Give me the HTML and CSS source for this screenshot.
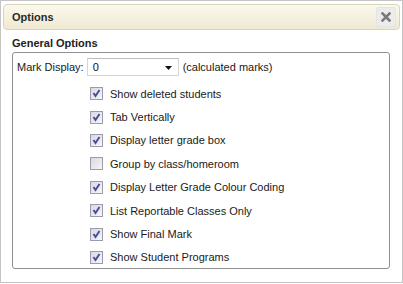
FILE: index.html
```html
<!DOCTYPE html>
<html>
<head>
<meta charset="utf-8">
<link rel="stylesheet" href="styles.css">
</head>
<body>
<div class="dialog">
  <div class="titlebar">
    <span class="title">Options</span>
    <button class="close" type="button" aria-label="Close">
      <svg width="10" height="10" viewBox="0 0 10 10"><path d="M1.5 1.5 L8.5 8.5 M8.5 1.5 L1.5 8.5" stroke="#7a7a7a" stroke-width="2.6" stroke-linecap="square"/></svg>
    </button>
  </div>
  <div class="content">
    <div class="legend">General Options</div>
    <div class="box">
      <div class="mark-row">
        <span class="mark-label">Mark Display:</span>
        <div class="select">
          <span class="select-value">0</span>
          <svg class="arrow" width="7" height="4" viewBox="0 0 7 4"><path d="M0 0 H7 L3.5 4 Z" fill="#111"/></svg>
        </div>
        <span class="hint">(calculated marks)</span>
      </div>
      <ul class="opts">
        <li class="opt"><span class="cb on"><svg width="11" height="11" viewBox="0 0 11 11"><path d="M2.5 5 L4.5 8 L8.5 2" fill="none" stroke="#4a4f9a" stroke-width="2"/></svg></span><span>Show deleted students</span></li>
        <li class="opt"><span class="cb on"><svg width="11" height="11" viewBox="0 0 11 11"><path d="M2.5 5 L4.5 8 L8.5 2" fill="none" stroke="#4a4f9a" stroke-width="2"/></svg></span><span>Tab Vertically</span></li>
        <li class="opt"><span class="cb on"><svg width="11" height="11" viewBox="0 0 11 11"><path d="M2.5 5 L4.5 8 L8.5 2" fill="none" stroke="#4a4f9a" stroke-width="2"/></svg></span><span>Display letter grade box</span></li>
        <li class="opt"><span class="cb"></span><span>Group by class/homeroom</span></li>
        <li class="opt"><span class="cb on"><svg width="11" height="11" viewBox="0 0 11 11"><path d="M2.5 5 L4.5 8 L8.5 2" fill="none" stroke="#4a4f9a" stroke-width="2"/></svg></span><span>Display Letter Grade Colour Coding</span></li>
        <li class="opt"><span class="cb on"><svg width="11" height="11" viewBox="0 0 11 11"><path d="M2.5 5 L4.5 8 L8.5 2" fill="none" stroke="#4a4f9a" stroke-width="2"/></svg></span><span>List Reportable Classes Only</span></li>
        <li class="opt"><span class="cb on"><svg width="11" height="11" viewBox="0 0 11 11"><path d="M2.5 5 L4.5 8 L8.5 2" fill="none" stroke="#4a4f9a" stroke-width="2"/></svg></span><span>Show Final Mark</span></li>
        <li class="opt"><span class="cb on"><svg width="11" height="11" viewBox="0 0 11 11"><path d="M2.5 5 L4.5 8 L8.5 2" fill="none" stroke="#4a4f9a" stroke-width="2"/></svg></span><span>Show Student Programs</span></li>
      </ul>
    </div>
  </div>
</div>
</body>
</html>
```

FILE: styles.css
```css
* { box-sizing: border-box; }
html, body {
  margin: 0;
  padding: 0;
  background: #ffffff;
}
body {
  font-family: "Liberation Sans", Arial, sans-serif;
  font-size: 11px;
  color: #1a1a1a;
}
.dialog {
  width: 403px;
  height: 283px;
  border: 1px solid #c4c4c4;
  padding: 3px 2px 0 2px;
  background: #fff;
}
.titlebar {
  height: 26px;
  border: 1px solid #d9d3b9;
  border-radius: 4px;
  background: linear-gradient(#fbf9ee, #efe9d2);
  display: flex;
  align-items: center;
  justify-content: space-between;
  padding: 0 3px 0 8px;
}
.title {
  font-weight: bold;
  color: #2a2a2a;
}
.close {
  width: 20px;
  height: 20px;
  padding: 0;
  margin: 0;
  border: 1px solid #e4e4e4;
  border-radius: 2px;
  background: #ececec;
  display: flex;
  align-items: center;
  justify-content: center;
}
.content {
  padding: 7px 10px 0 9px;
}
.legend {
  font-weight: bold;
  color: #222;
  height: 15px;
  line-height: 13px;
}
.box {
  height: 217px;
  border: 1px solid #909090;
  border-radius: 3px;
  padding: 5px 0 0 4px;
}
.mark-row {
  display: flex;
  align-items: center;
  height: 18px;
}
.mark-label {
  margin-right: 3px;
}
.select {
  width: 92px;
  height: 18px;
  border: 1px solid #d6d6d6;
  border-top-color: #bdbdbd;
  background: #fff;
  display: flex;
  align-items: center;
  justify-content: space-between;
  padding: 0 6px 0 5px;
  margin-right: 4px;
}
.select-value { color: #111; }
.arrow { margin-top: 2px; }
.opts {
  list-style: none;
  margin: 6px 0 0 0;
  padding: 0 0 0 73px;
}
.opt {
  height: 23.4px;
  display: flex;
  align-items: center;
}
.cb {
  width: 13px;
  height: 13px;
  border: 1px solid #9a9cae;
  background: linear-gradient(135deg, #d8d8de, #f7f7f9);
  margin-right: 7px;
  display: flex;
  align-items: center;
  justify-content: center;
  flex: none;
}
.cb svg { display: block; }
```
